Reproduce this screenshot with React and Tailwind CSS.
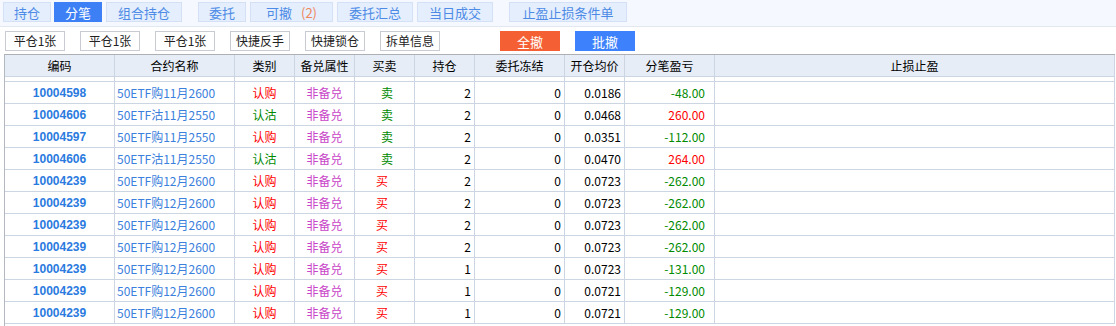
const cols = "grid grid-cols-[110px_120px_60px_60px_60px_60px_90px_60px_90px_400px]";

const tabs = [
  { label: "持仓", w: "w-[48px]", ml: "ml-[3px]" },
  { label: "分笔", w: "w-[48px]", ml: "ml-[3px]", active: true },
  { label: "组合持仓", w: "w-[76px]", ml: "ml-[4px]" },
  { label: "委托", w: "w-[48px]", ml: "ml-[16px]" },
  { label: "可撤", w: "w-[83px]", ml: "ml-[4px]", badge: "(2)" },
  { label: "委托汇总", w: "w-[76px]", ml: "ml-[4px]" },
  { label: "当日成交", w: "w-[76px]", ml: "ml-[4px]" },
  { label: "止盈止损条件单", w: "w-[118px]", ml: "ml-[16px]" },
];

const actions = ["平仓1张", "平仓1张", "平仓1张", "快捷反手", "快捷锁仓", "拆单信息"];

const headers = ["编码", "合约名称", "类别", "备兑属性", "买卖", "持仓", "委托冻结", "开仓均价", "分笔盈亏", "止损止盈"];

const rows = [
  ["10004598", "50ETF购11月2600", "认购", "卖", 2, "0.0186", "-48.00"],
  ["10004606", "50ETF沽11月2550", "认沽", "卖", 2, "0.0468", "260.00"],
  ["10004597", "50ETF购11月2550", "认购", "卖", 2, "0.0351", "-112.00"],
  ["10004606", "50ETF沽11月2550", "认沽", "卖", 2, "0.0470", "264.00"],
  ["10004239", "50ETF购12月2600", "认购", "买", 2, "0.0723", "-262.00"],
  ["10004239", "50ETF购12月2600", "认购", "买", 2, "0.0723", "-262.00"],
  ["10004239", "50ETF购12月2600", "认购", "买", 2, "0.0723", "-262.00"],
  ["10004239", "50ETF购12月2600", "认购", "买", 2, "0.0723", "-262.00"],
  ["10004239", "50ETF购12月2600", "认购", "买", 1, "0.0723", "-131.00"],
  ["10004239", "50ETF购12月2600", "认购", "买", 1, "0.0721", "-129.00"],
  ["10004239", "50ETF购12月2600", "认购", "买", 1, "0.0721", "-129.00"],
];

// grid lines between cells
const cell = "h-[21px] flex items-center border-r border-[#ccd6e2]";

const Row = ({ r }) => {
  const [code, name, kind, side, qty, price, pnl] = r;
  const red = "text-[#ff0000]";
  const green = "text-[#008a00]";
  return (
    <div className={`${cols} border-b border-[#ccd6e2]`}>
      <div className={`${cell} justify-center font-['Liberation_Sans'] font-bold text-[12px] text-[#2a7ae0]`}>{code}</div>
      <div className={`${cell} pl-[2px] text-[#3a80dc]`}>{name}</div>
      <div className={`${cell} justify-center ${kind === "认购" ? red : green}`}>{kind}</div>
      <div className={`${cell} justify-center text-[#c844c8]`}>非备兑</div>
      <div className={`${cell} ${side === "卖" ? `${green} pl-[26px]` : `${red} pl-[21px]`}`}>{side}</div>
      <div className={`${cell} justify-end pr-[3px]`}>{qty}</div>
      <div className={`${cell} justify-end pr-[3px]`}>0</div>
      <div className={`${cell} justify-end pr-[3px]`}>{price}</div>
      <div className={`${cell} justify-end pr-[9px] ${pnl.startsWith("-") ? green : red}`}>{pnl}</div>
      <div className={cell} />
    </div>
  );
};

export default function App() {
  return (
    <div className="w-[1116px] h-[326px] overflow-hidden bg-white font-['Noto_Sans_CJK_SC',sans-serif] text-[12px] text-black">
      {/* tab bar */}
      <div className="h-[27px] bg-[#f5f9ff] border-b border-[#e2e8f0] flex items-start pt-[2px]">
        {tabs.map((t, i) => (
          <div
            key={i}
            className={`${t.w} ${t.ml} h-[20px] flex items-center justify-center text-[13px] leading-none border ${
              t.active ? "bg-[#3d80f5] border-[#3d80f5] text-white" : "bg-[#e4eefc] border-[#d3e0f5] text-[#4d8be6]"
            }`}
          >
            {t.label}
            {t.badge && <span className="ml-[9px] text-[#f0855a]">{t.badge}</span>}
          </div>
        ))}
      </div>

      {/* action buttons */}
      <div className="h-[27px] flex items-start pt-[4px] pl-[5px]">
        {actions.map((a, i) => (
          <button
            key={i}
            className={`w-[60px] h-[20px] border border-[#c8ccd2] bg-white text-[12px] text-[#222] leading-none ${i > 0 ? "ml-[15px]" : ""}`}
          >
            {a}
          </button>
        ))}
        <button className="ml-[60px] w-[60px] h-[20px] bg-[#f45f33] text-white text-[13px] leading-none">全撤</button>
        <button className="ml-[15px] w-[60px] h-[20px] bg-[#3d82fc] text-white text-[13px] leading-none">批撤</button>
      </div>

      {/* table */}
      <div className="ml-[4px] w-[1111px] border-t border-l border-t-[#aeb0b4] border-l-[#b4b8c0]">
        <div className={`${cols} bg-[#e7edf6] border-b border-[#ccd6e2]`}>
          {headers.map((h, i) => (
            <div key={i} className="h-[21px] flex items-center justify-center border-r border-[#ccd6e2]">
              {h}
            </div>
          ))}
        </div>
        <div className={`${cols} border-b border-[#ccd6e2]`}>
          {headers.map((h, i) => (
            <div key={i} className="h-[4px] border-r border-[#ccd6e2]" />
          ))}
        </div>
        {rows.map((r, i) => (
          <Row key={i} r={r} />
        ))}
        <div className="h-[10px]" />
      </div>
    </div>
  );
}
